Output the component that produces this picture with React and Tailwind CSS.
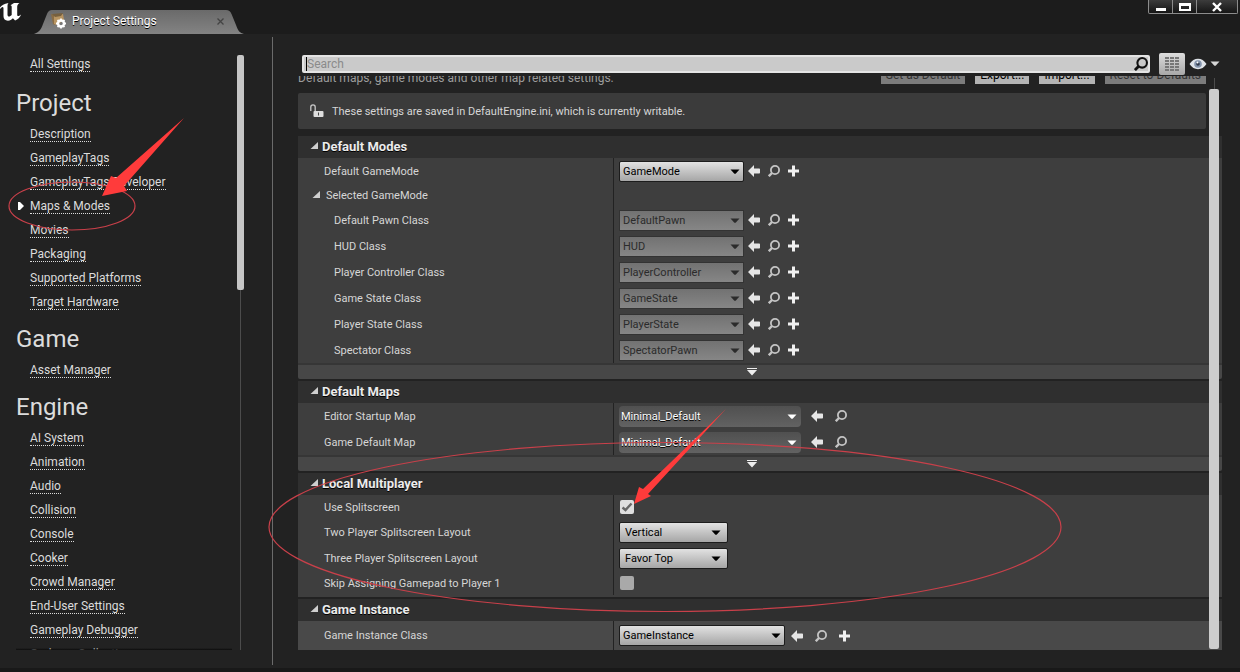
import React from 'react';

const sidebarSections = [
  {
    title: 'Project',
    items: [
      'Description',
      'GameplayTags',
      'GameplayTags Developer',
      'Maps & Modes',
      'Movies',
      'Packaging',
      'Supported Platforms',
      'Target Hardware',
    ],
  },
  { title: 'Game', items: ['Asset Manager'] },
  {
    title: 'Engine',
    items: [
      'AI System',
      'Animation',
      'Audio',
      'Collision',
      'Console',
      'Cooker',
      'Crowd Manager',
      'End-User Settings',
      'Gameplay Debugger',
      'Garbage Collection',
    ],
  },
];

const modeClasses = [
  { id: 'pawn', label: 'Default Pawn Class', value: 'DefaultPawn' },
  { id: 'hud', label: 'HUD Class', value: 'HUD' },
  { id: 'controller', label: 'Player Controller Class', value: 'PlayerController' },
  { id: 'game-state', label: 'Game State Class', value: 'GameState' },
  { id: 'player-state', label: 'Player State Class', value: 'PlayerState' },
  { id: 'spectator', label: 'Spectator Class', value: 'SpectatorPawn' },
];

const UnrealLogo = () => (
  <svg width="22" height="24" viewBox="0 0 22 24" fill="#fff" aria-hidden="true">
    <path d="M0 7.500C1.500 5.500 4 3.500 8.500 3C7.700 4 7.500 5 7.500 6.500V14.500c0 1.500.7 2 1.400 2 1 0 2-.8 2.800-1.600V7c0-1-.3-1.600-1.200-1.700L14 3h5.500c-1.500 1-2.300 2-2.300 4v7.500c0 1.200.4 1.600 1.100 1.600.9 0 1.900-.8 2.800-1.600-1 2.500-3.300 5.300-6 6l-2.200-2.300c-1.500 1.300-2.800 2.300-5 2.500-2.800-.2-4.400-1.700-4.400-4.500V8.500c0-1.500-.8-2-2-1L0 9z" />
  </svg>
);

const TabIcon = () => (
  <svg width="18" height="18" viewBox="0 0 18 18" aria-hidden="true">
    <path d="M1 2l4 1v10l-2-1z" fill="#8a6d45" />
    <path d="M4 3l9-1 1 6-7 5-3-1z" fill="#b89562" />
    <path d="M2 2l11-1-2 3-6 1z" fill="#77603e" />
    <circle cx="11" cy="11.500" r="3" fill="none" stroke="#fff" strokeWidth="2.400" />
    <path d="M11 6.500v2M11 14.500v2M6 11.500h2M14 11.500h2M7.500 8l1.400 1.400M13.100 13.600l1.400 1.400M14.500 8l-1.400 1.400M8.900 13.600L7.500 15" stroke="#fff" strokeWidth="1.800" />
  </svg>
);

const Caret = ({ className }) => (
  <svg width="10" height="6" viewBox="0 0 10 6" className={className} fill="currentColor" aria-hidden="true">
    <path d="M0.500 0.500h9L5.600 4.800h-1.200z" />
  </svg>
);

const ArrowIcon = () => (
  <svg width="12" height="12" viewBox="0 0 12 12" fill="#e6e6e6" aria-hidden="true">
    <path d="M0 6L6 0v3.500h5.200q.8 0 .8.800v3.400q0 .8-.8.800H6V12z" />
  </svg>
);

const FindIcon = ({ size = 12, color = '#c4c4c4' }) => (
  <svg width={size} height={size} viewBox="0 0 12 12" fill="none" stroke={color} aria-hidden="true">
    <circle cx="7" cy="5" r="4.100" strokeWidth="1.800" />
    <path d="M4 8L0.800 11.200" strokeWidth="2.400" />
  </svg>
);

const PlusIcon = () => (
  <svg width="12" height="12" viewBox="0 0 12 12" fill="#f0f0f0" aria-hidden="true">
    <path d="M4 .5h3v4h4v3h-4v4h-3v-4h-4v-3h4z" />
  </svg>
);

const Disclosure = () => (
  <svg width="8" height="10" viewBox="0 0 8 10" fill="#cfcfcf" aria-hidden="true">
    <path d="M8 0v7H0.500z" />
  </svg>
);

const SelectBox = ({ id, value, width, look = 'light', padding = 'pl-[3px]', caret = 'right-1', disabled = false }) => {
  const looks = {
    light: 'rounded-xs border border-[#1c1c1c] bg-linear-to-b from-[#e2e2e2] to-[#a6a6a6]',
    muted: 'border border-[#333] bg-linear-to-b from-[#727272] to-[#868686]',
    asset: 'rounded-sm bg-linear-to-b from-[#505050] to-[#626262] text-shadow-2xs text-shadow-black',
  };
  const colors = { light: 'text-black', muted: 'text-[#2b2b2b]', asset: 'text-white' };

  return (
    <div className={`relative ${width} ${colors[look]}`}>
      <select
        id={id}
        defaultValue={value}
        disabled={disabled}
        className={`block h-[21px] w-full appearance-none pt-0.5 pr-4 text-[11px] opacity-100 ${padding} ${looks[look]}`}
      >
        <option>{value}</option>
      </select>
      <Caret className={`pointer-events-none absolute top-2 ${caret}`} />
    </div>
  );
};

const CheckBox = ({ id, checked = false }) => (
  <div className="ml-px grid size-[14px]">
    <input
      id={id}
      type="checkbox"
      defaultChecked={checked}
      className="peer col-start-1 row-start-1 size-[14px] appearance-none rounded-xs bg-[#a9a9a9] checked:bg-[#dedede]"
    />
    <svg
      width="14"
      height="14"
      viewBox="0 0 14 14"
      className="pointer-events-none invisible col-start-1 row-start-1 peer-checked:visible"
      fill="none"
      stroke="#666"
      strokeWidth="2.400"
      aria-hidden="true"
    >
      <path d="M2.500 7.500l3 2.500 6-6.500" />
    </svg>
  </div>
);

const RowActions = ({ name, add = true, wide = false }) => (
  <div className={`flex items-center ${wide ? 'gap-3' : 'gap-2'}`}>
    <button type="button" aria-label={`Use selected asset for ${name}`}>
      <ArrowIcon />
    </button>
    <button type="button" aria-label={`Browse to ${name}`}>
      <FindIcon />
    </button>
    {add && (
      <button type="button" aria-label={`Create new ${name}`}>
        <PlusIcon />
      </button>
    )}
  </div>
);

const Row = ({ label, htmlFor, indent = 'pl-[26px]', height = 'h-[26px]', children }) => (
  <div className={`flex ${height}`}>
    <div className={`flex w-[316px] items-center border-r border-[#222] pt-0.5 ${indent}`}>
      <label htmlFor={htmlFor}>{label}</label>
    </div>
    <div className="flex flex-1 items-center pl-[5px]">{children}</div>
  </div>
);

const Category = ({ title, advanced = false, body = 'bg-[#3e3e3e]', children }) => (
  <section className="mb-0.5">
    <h2 className="flex h-[22px] items-center gap-1 bg-[#2f2f2f] pl-3 text-[13px] font-bold text-[#ececec] text-shadow-2xs text-shadow-black">
      <Disclosure />
      {title}
    </h2>
    <div className={body}>{children}</div>
    {advanced && (
      <button
        type="button"
        aria-label={`Show advanced ${title}`}
        className="flex h-4 w-full items-center justify-center rounded-b-xs border-t-2 border-[#363636] bg-[#474747] pr-4"
      >
        <svg width="10" height="8" viewBox="0 0 10 8" fill="#eee" aria-hidden="true">
          <path d="M0 0h10v1H0zM0 2h10L5 7.500z" />
        </svg>
      </button>
    )}
  </section>
);

const Sidebar = () => (
  <nav className="flex w-[273px] shrink-0 border-r border-[#6b6b6b] pt-[15px] pb-[15px] text-[12px] text-[#dcdcdc]">
    <div className="relative min-h-0 flex-1 overflow-hidden pl-4">
      <a href="#all" className="mb-2 ml-[14px] flex h-6 items-center">
        <span className="border-b border-dotted border-[#dcdcdc] leading-[14px]">All Settings</span>
      </a>
      {sidebarSections.map((section) => (
        <div key={section.title} className="mb-1.5">
          <h2 className="flex h-[38px] items-center text-[24px]">{section.title}</h2>
          <ul>
            {section.items.map((item) => (
              <li key={item} className="flex h-6 items-center">
                <span className="w-[14px] shrink-0">
                  {item === 'Maps & Modes' && (
                    <svg width="6" height="8" viewBox="0 0 6 8" className="ml-0.5" fill="#fff" aria-hidden="true">
                      <path d="M0 0h2l4 4-4 4H0z" />
                    </svg>
                  )}
                </span>
                <a href="#section" className="border-b border-dotted border-[#dcdcdc] leading-[14px] whitespace-nowrap">
                  {item}
                </a>
              </li>
            ))}
          </ul>
        </div>
      ))}
      <div className="absolute right-0 bottom-0 left-4 h-0.5 bg-linear-to-b from-transparent to-[#0c0c0c]" />
    </div>
    <div className="mr-7 ml-1 flex w-2 flex-col items-center pt-[3px]">
      <div className="h-[235px] w-[7px] rounded-xs bg-[#c6c6c6]" />
      <div className="w-px flex-1 bg-[#4c4c4c]" />
    </div>
  </nav>
);

const Annotations = () => (
  <svg
    width="1240"
    height="672"
    viewBox="0 0 1240 672"
    className="pointer-events-none absolute top-0 left-0"
    fill="none"
    aria-hidden="true"
  >
    <ellipse cx="72" cy="206" rx="63" ry="24" stroke="#c9404a" strokeWidth="1.200" />
    <ellipse cx="665" cy="527" rx="396" ry="84.500" stroke="#c9404a" strokeWidth="1.200" />
    <path d="M184 118L124 186l3 5-25 5 9-20 5 2z" fill="#ff3b3b" />
    <path d="M726 409L648 494l3 2-17 8 5-17 4 2z" fill="#ff3b3b" />
  </svg>
);

const App = () => {
  return (
    <div className="relative flex h-screen min-h-[480px] flex-col overflow-hidden border-b-4 border-[#191919] bg-[#222] font-[Roboto,sans-serif] text-[11px] text-[#d6d6d6]">
      <header className="flex h-[34px] shrink-0 items-end bg-[#1c1c1c]">
        <div className="w-[34px] self-start">
          <UnrealLogo />
        </div>
        <div className="relative flex h-6 w-[210px] items-center pr-5 pb-0.5 pl-4">
          <svg className="absolute inset-0" width="210" height="24" viewBox="0 0 210 24" aria-hidden="true">
            <defs>
              <linearGradient id="tab" x1="0" y1="0" x2="0" y2="1">
                <stop offset="0" stopColor="#6a6a6a" />
                <stop offset="1" stopColor="#838383" />
              </linearGradient>
            </defs>
            <path d="M0 24C5 22 7 20 9 14L13 4Q14.500 0 18 0H192Q196 0 197.500 4L202 15C204 21 206 23 210 24z" fill="url(#tab)" />
          </svg>
          <div className="relative flex w-full items-center gap-1">
            <TabIcon />
            <span className="flex-1 text-[12px] text-white text-shadow-2xs text-shadow-black">Project Settings</span>
            <button type="button" aria-label="Close tab">
              <svg width="7" height="7" viewBox="0 0 7 7" stroke="#444" strokeWidth="1.300" aria-hidden="true">
                <path d="M.5 .5l6 6M6.500 .5l-6 6" />
              </svg>
            </button>
          </div>
        </div>
        <div className="mr-0.5 ml-auto flex h-[14px] self-start rounded-b-xs border border-t-0 border-[#8c8c8c] bg-linear-to-b from-[#3c3c3c] to-[#161616]">
          <button type="button" aria-label="Minimize" className="flex w-6 items-center justify-center border-r border-[#8c8c8c]">
            <svg width="10" height="10" viewBox="0 0 10 10" fill="#fff"><path d="M0 6h10v3H0z" /></svg>
          </button>
          <button type="button" aria-label="Restore" className="flex w-6 items-center justify-center border-r border-[#8c8c8c]">
            <svg width="12" height="10" viewBox="0 0 12 10" fill="#fff"><path fillRule="evenodd" d="M0 1h12v8H0zM2 4v3h8V4z" /></svg>
          </button>
          <button type="button" aria-label="Close" className="flex w-10 items-center justify-center">
            <svg width="10" height="10" viewBox="0 0 10 10" stroke="#fff" strokeWidth="2.400"><path d="M1 1l8 8M9 1l-8 8" /></svg>
          </button>
        </div>
      </header>

      <div className="flex min-h-0 flex-1 pt-[3px] pb-[3px]">
        <Sidebar />

        <main className="flex min-w-0 flex-1 flex-col pt-4 pr-[18px] pb-[14px] pl-[25px]">
          <div className="flex h-[22px] shrink-0 items-center pr-0.5 pl-1">
            <div className="flex h-[18px] flex-1 items-center rounded-xs border-2 border-[#e4e4e4] bg-[#cacaca] pl-0.5">
              <span className="h-[14px] w-px bg-black" />
              <input
                type="text"
                aria-label="Search settings"
                placeholder="Search"
                className="h-[14px] min-w-0 flex-1 text-[12px] text-black placeholder-[#8b8b8b] outline-none"
              />
              <FindIcon size={14} color="#111" />
            </div>
            <button
              type="button"
              aria-label="Toggle table view"
              className="mr-1 ml-[9px] flex h-[22px] w-[26px] items-center justify-center rounded-xs bg-linear-to-b from-[#ddd] to-[#a8a8a8]"
            >
              <svg width="14" height="14" viewBox="0 0 14 14" stroke="#777" strokeWidth="2" aria-hidden="true">
                <path d="M0 1h14M0 4h14M0 7h14M0 10h14M0 13h14" strokeDasharray="4 1" />
              </svg>
            </button>
            <button type="button" aria-label="View options" className="flex items-center gap-[3px]">
              <svg width="18" height="12" viewBox="0 0 18 12" aria-hidden="true">
                <path d="M0.500 6Q4 .8 9 .8T17.500 6Q14 11.200 9 11.200T.5 6z" fill="#dfe3e8" />
                <circle cx="9" cy="6" r="3.800" fill="#8494ac" />
                <circle cx="9" cy="6" r="1.800" fill="#2f3a4c" />
                <circle cx="8.500" cy="4.600" r="1" fill="#fff" />
              </svg>
              <Caret />
            </button>
          </div>

          <div className="relative mt-px min-h-0 flex-1 overflow-hidden">
            <div className="-mt-3 mr-4 flex h-5 items-end gap-[10px]">
              <p className="flex-1 text-[12px] leading-3 text-[#9c9c9c]">
                Default maps, game modes and other map related settings.
              </p>
              <button type="button" disabled className="h-5 bg-[#7c7c7c] px-[5px] pt-0.5 text-[12px] text-[#333]">Set as Default</button>
              <button type="button" className="h-5 bg-[#b4b4b4] px-[5px] pt-0.5 text-[12px] text-black">Export...</button>
              <button type="button" className="h-5 bg-[#b4b4b4] px-[5px] pt-0.5 text-[12px] text-black">Import...</button>
              <button type="button" disabled className="h-5 bg-[#7c7c7c] px-[5px] pt-0.5 text-[12px] text-[#333]">Reset to Defaults</button>
            </div>

            <div className="mt-[9px] mr-4 mb-[7px] flex h-9 items-center gap-2 rounded-xs bg-[#3b3b3b] pl-3">
              <svg width="14" height="14" viewBox="0 0 14 14" aria-hidden="true">
                <path d="M.8 7V3Q.8.800 3 .8T5.200 3v4" fill="none" stroke="#c8c8c8" strokeWidth="1.300" />
                <rect x="3.500" y="7" width="10" height="6" rx="1" fill="#dedede" />
                <path d="M8 8.500h1v3H8z" fill="#444" />
              </svg>
              <p className="pt-0.5">These settings are saved in DefaultEngine.ini, which is currently writable.</p>
            </div>

            <Category title="Default Modes" advanced>
              <Row label="Default GameMode" htmlFor="game-mode">
                <SelectBox id="game-mode" value="GameMode" width="mr-1 w-[125px]" />
                <RowActions name="Default GameMode" />
              </Row>
              <div className="flex h-[23px]">
                <div className="flex w-[316px] items-center gap-1.5 border-r border-[#222] pl-[14px]">
                  <Disclosure />
                  <span className="pt-0.5">Selected GameMode</span>
                </div>
              </div>
              {modeClasses.map((cls) => (
                <Row key={cls.id} label={cls.label} htmlFor={cls.id} indent="pl-9">
                  <SelectBox id={cls.id} value={cls.value} width="mr-1 w-[125px]" look="muted" disabled />
                  <RowActions name={cls.label} />
                </Row>
              ))}
            </Category>

            <Category title="Default Maps" advanced>
              <Row label="Editor Startup Map" htmlFor="startup-map">
                <SelectBox
                  id="startup-map"
                  value="Minimal_Default"
                  width="mr-[10px] w-[182px]"
                  look="asset"
                  padding="pl-0.5"
                />
                <RowActions name="Editor Startup Map" add={false} wide />
              </Row>
              <Row label="Game Default Map" htmlFor="default-map">
                <SelectBox
                  id="default-map"
                  value="Minimal_Default"
                  width="mr-[10px] w-[182px]"
                  look="asset"
                  padding="pl-0.5"
                />
                <RowActions name="Game Default Map" add={false} wide />
              </Row>
            </Category>

            <Category title="Local Multiplayer">
              <Row label="Use Splitscreen" htmlFor="splitscreen" height="h-6">
                <CheckBox id="splitscreen" checked />
              </Row>
              <Row label="Two Player Splitscreen Layout" htmlFor="two-player">
                <SelectBox id="two-player" value="Vertical" width="w-[109px]" padding="pl-[5px]" caret="right-[7px]" />
              </Row>
              <Row label="Three Player Splitscreen Layout" htmlFor="three-player">
                <SelectBox id="three-player" value="Favor Top" width="w-[109px]" padding="pl-[5px]" caret="right-[7px]" />
              </Row>
              <div className="pb-0.5">
                <Row label="Skip Assigning Gamepad to Player 1" htmlFor="skip-gamepad" height="h-6">
                  <CheckBox id="skip-gamepad" />
                </Row>
              </div>
            </Category>

            <Category title="Game Instance" body="bg-[#494949]">
              <Row label="Game Instance Class" htmlFor="game-instance" height="h-[29px]">
                <SelectBox id="game-instance" value="GameInstance" width="mr-[6px] w-[166px]" />
                <RowActions name="Game Instance Class" wide />
              </Row>
            </Category>

            <div className="absolute top-0.5 right-[3px] bottom-0.5 flex w-[10px] flex-col items-center">
              <div className="h-[11px] w-px bg-[#4c4c4c]" />
              <div className="w-full flex-1 rounded-xs bg-[#cdcdcd]" />
            </div>
          </div>
        </main>
      </div>

      <Annotations />
    </div>
  );
};

export default App;
